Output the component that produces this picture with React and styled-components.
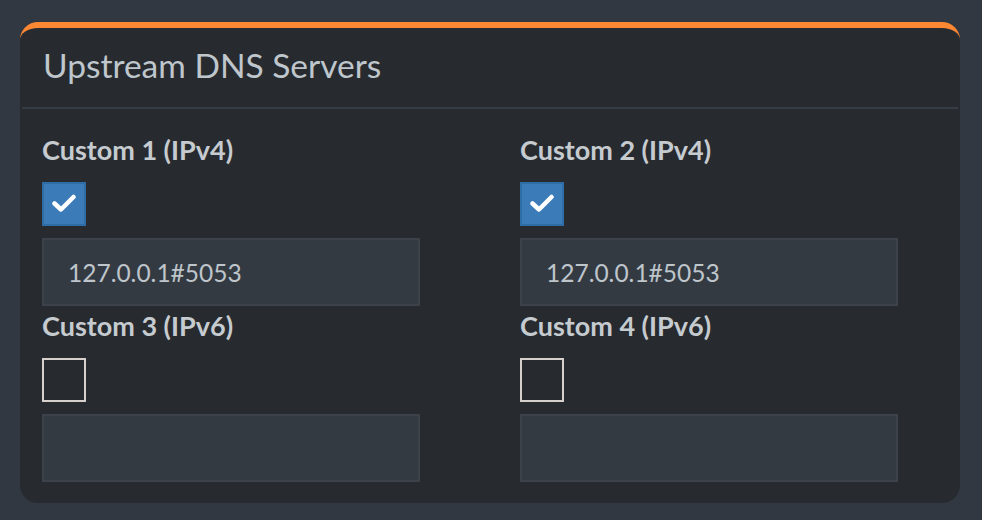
import React from "react";
import styled, { createGlobalStyle } from "styled-components";

const Global = createGlobalStyle`
  html, body { margin: 0; padding: 0; background: #313841; }
  body { font-family: Lato, "Open Sans", sans-serif; }
  * { box-sizing: border-box; }
`;

const Page = styled.div`
  width: 982px;
  height: 520px;
  padding: 22px 0 0 20px;
  background: #313841;
`;

const Card = styled.section`
  width: 940px;
  height: 481px;
  background: #272b30;
  border-top: 6px solid #fd8732;
  border-radius: 18px;
  display: flex;
  flex-direction: column;
`;

const Header = styled.header`
  height: 81px;
  margin: 0 2px;
  padding: 0 0 3px 21px;
  border-bottom: 2px solid #363c44;
  display: flex;
  align-items: center;
`;

const Title = styled.h3`
  margin: 0;
  font-size: 33.5px;
  font-weight: 400;
  line-height: 1;
  color: #bfc6cc;
`;

const Body = styled.div`
  padding: 25px 22px 0;
  display: grid;
  grid-template-columns: 378px 378px;
  column-gap: 100px;
  row-gap: 4px;
`;

const Field = styled.div`
  display: flex;
  flex-direction: column;
`;

const Label = styled.label`
  font-size: 27px;
  font-weight: 700;
  line-height: 32px;
  color: #c6cbd0;
  margin-bottom: 16px;
`;

const Box = styled.span`
  width: 44px;
  height: 44px;
  margin-bottom: 12px;
  display: flex;
  align-items: center;
  justify-content: center;
  background: ${(p) => (p.$checked ? "#3a7bb8" : "transparent")};
  border: 2px solid ${(p) => (p.$checked ? "#2f6da6" : "#d6d1cc")};
`;

const Input = styled.div`
  height: 68px;
  width: 378px;
  background: #343a42;
  border: 2px solid #3c424a;
  padding-left: 24px;
  display: flex;
  align-items: center;
  font-size: 24.5px;
  color: #bec5cb;
`;

const Check = () => (
  <svg width="24" height="20" viewBox="0 0 24 20">
    <polyline
      points="2.5,9.5 9,15.5 21.5,3"
      fill="none"
      stroke="#fff"
      strokeWidth="4.5"
      strokeLinecap="round"
      strokeLinejoin="round"
    />
  </svg>
);

const fields = [
  { label: "Custom 1 (IPv4)", checked: true, value: "127.0.0.1#5053" },
  { label: "Custom 2 (IPv4)", checked: true, value: "127.0.0.1#5053" },
  { label: "Custom 3 (IPv6)", checked: false, value: "" },
  { label: "Custom 4 (IPv6)", checked: false, value: "" },
];

export default function App() {
  return (
    <Page>
      <Global />
      <Card>
        <Header>
          <Title>Upstream DNS Servers</Title>
        </Header>
        <Body>
          {fields.map((f) => (
            <Field key={f.label}>
              <Label>{f.label}</Label>
              <Box $checked={f.checked}>{f.checked && <Check />}</Box>
              <Input>{f.value}</Input>
            </Field>
          ))}
        </Body>
      </Card>
    </Page>
  );
}
